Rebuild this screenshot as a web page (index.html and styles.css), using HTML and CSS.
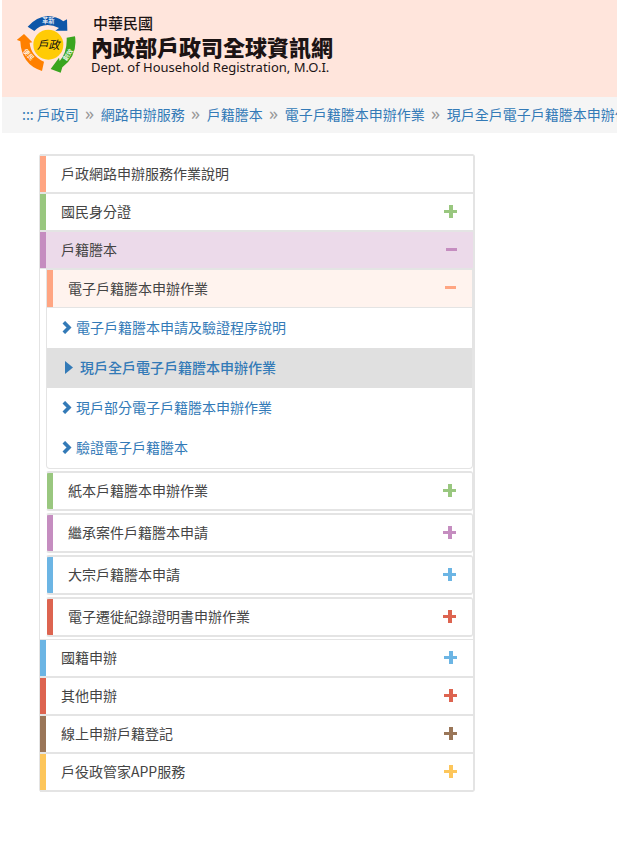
FILE: index.html
```html
<!DOCTYPE html>
<html lang="zh-Hant">
<head>
<meta charset="utf-8">
<meta name="viewport" content="width=device-width, initial-scale=1">
<title>內政部戶政司全球資訊網</title>
<link rel="stylesheet" href="styles.css">
</head>
<body>
<svg class="sprite" aria-hidden="true">
  <symbol id="plus" viewBox="0 0 13 13"><path fill="currentColor" d="M5 0h4v5h4v3H9v5H5V8H0V5h5z"/></symbol>
  <symbol id="minus" viewBox="0 0 13 13"><path fill="currentColor" d="M2 5h11v3H2z"/></symbol>
  <symbol id="chevron" viewBox="0 0 10 13"><path fill="none" stroke="currentColor" stroke-width="3.6" d="M1.8 1.2L7 6.5l-5.2 5.3"/></symbol>
  <symbol id="caret" viewBox="0 0 8 13"><path fill="currentColor" d="M0 0l8 6.5L0 13z"/></symbol>
</svg>
<header class="header">
  <a class="brand" href="#">
    <svg class="logo" viewBox="21 31 180 180" aria-hidden="true">
      <path fill="#0d56a8" d="M53 66Q80 36 113 34Q140 35 160 50L171 44L172 78L136 78L147 70Q130 61 113 61Q88 61 73 79Z"/>
      <path fill="#3aa51f" d="M170 99L195 95Q204 152 157 188L152 204L122 193L147 159L149 169Q172 143 170 99Z"/>
      <path fill="#ff8000" d="M42 88L67 113L59 114Q62 153 102 171L96 199Q34 180 31 110L20 106Z"/>
      <circle cx="115" cy="120" r="45" fill="#ffcb05"/>
      <g class="logo-small">
        <text x="115" y="55">革新</text>
        <text x="56" y="157" transform="rotate(48 56 150)">便民</text>
        <text x="174" y="157" transform="rotate(-58 174 150)">創效</text>
      </g>
      <text class="logo-name" x="115" y="133">戶政</text>
    </svg>
    <span class="brand-text">
      <span class="country">中華民國</span>
      <span class="site">內政部戶政司全球資訊網</span>
      <span class="english">Dept. of Household Registration, M.O.I.</span>
    </span>
  </a>
</header>
<nav class="crumbs" aria-label="breadcrumb">
  <a class="anchor" href="#">:::</a>
  <ol class="crumb-list">
    <li><a href="#">戶政司</a></li>
    <li><a href="#">網路申辦服務</a></li>
    <li><a href="#">戶籍謄本</a></li>
    <li><a href="#">電子戶籍謄本申辦作業</a></li>
    <li><a href="#">現戶全戶電子戶籍謄本申辦作業</a></li>
  </ol>
</nav>
<main class="main">
  <nav class="menu">
    <a class="row orange" href="#">戶政網路申辦服務作業說明</a>
    <button class="row green" type="button">國民身分證<svg class="icon"><use href="#plus"/></svg></button>
    <button class="row purple open" type="button">戶籍謄本<svg class="icon"><use href="#minus"/></svg></button>
    <div class="submenu">
      <div class="panel">
        <button class="row orange open" type="button">電子戶籍謄本申辦作業<svg class="icon"><use href="#minus"/></svg></button>
        <ul class="links">
          <li><a href="#"><svg class="chevron"><use href="#chevron"/></svg>電子戶籍謄本申請及驗證程序說明</a></li>
          <li><a class="current" href="#"><svg class="caret"><use href="#caret"/></svg>現戶全戶電子戶籍謄本申辦作業</a></li>
          <li><a href="#"><svg class="chevron"><use href="#chevron"/></svg>現戶部分電子戶籍謄本申辦作業</a></li>
          <li><a href="#"><svg class="chevron"><use href="#chevron"/></svg>驗證電子戶籍謄本</a></li>
        </ul>
      </div>
      <button class="row green" type="button">紙本戶籍謄本申辦作業<svg class="icon"><use href="#plus"/></svg></button>
      <button class="row purple" type="button">繼承案件戶籍謄本申請<svg class="icon"><use href="#plus"/></svg></button>
      <button class="row blue" type="button">大宗戶籍謄本申請<svg class="icon"><use href="#plus"/></svg></button>
      <button class="row red" type="button">電子遷徙紀錄證明書申辦作業<svg class="icon"><use href="#plus"/></svg></button>
    </div>
    <button class="row blue" type="button">國籍申辦<svg class="icon"><use href="#plus"/></svg></button>
    <button class="row red" type="button">其他申辦<svg class="icon"><use href="#plus"/></svg></button>
    <button class="row brown" type="button">線上申辦戶籍登記<svg class="icon"><use href="#plus"/></svg></button>
    <button class="row yellow" type="button">戶役政管家APP服務<svg class="icon"><use href="#plus"/></svg></button>
  </nav>
</main>
</body>
</html>
```
FILE: styles.css
```css
* { box-sizing: border-box; }
body {
  margin: 0;
  padding-left: 2px;
  background: #fff;
  color: #444;
  font: 14px/20px "Noto Sans CJK TC", sans-serif;
}
a { color: #337ab7; text-decoration: none; }
.sprite { display: none; }

.header { padding: 13px 15px 11px; background: #ffe5dc; }
.brand { display: flex; gap: 14px; color: #1c1414; }
.logo { flex: none; width: 60px; height: 60px; margin-top: 2px; }
.logo-small { fill: #fff; font-size: 19px; font-weight: 500; text-anchor: middle; }
.logo-name { fill: #111; font-size: 34px; font-style: italic; text-anchor: middle; }
.brand-text { display: flex; flex-direction: column; height: 73px; white-space: nowrap; }
.country { padding-left: 2px; font-size: 15px; font-weight: 500; line-height: 20px; }
.site { font-size: 22px; font-weight: 900; line-height: 27px; }
.english { font: 13px/15px "Noto Sans", sans-serif; }

.crumbs {
  display: flex;
  gap: 3px;
  padding: 7px 0 9px 20px;
  overflow: hidden;
  background: #f5f5f5;
  white-space: nowrap;
}
.crumb-list { display: flex; margin: 0; padding: 0; list-style: none; }
.crumb-list li { display: flex; }
.crumb-list li + li::before {
  content: "»";
  width: 22px;
  color: #999;
  font: 18px/18px "Noto Sans", sans-serif;
  text-align: center;
}

.main { padding: 21px 20px 60px 37px; }
.menu {
  max-width: 436px;
  border: 1px solid #e4e4e4;
  border-width: 0 2px 0 1px;
  border-radius: 3px;
}
.row {
  display: flex;
  align-items: center;
  justify-content: space-between;
  width: 100%;
  min-height: 38px;
  padding: 0 16px 2px 21px;
  border: 0 solid #e4e4e4;
  border-top-width: 2px;
  background: linear-gradient(var(--tone), var(--tone)) left / 6px 100% no-repeat #fff;
  color: #444;
  font: inherit;
  text-align: left;
}
.menu > .row:last-child { min-height: 40px; border-bottom-width: 2px; }
.icon { flex: none; width: 13px; height: 13px; color: var(--tone); }
.orange { --tone: #ffa582; }
.green { --tone: #99c77f; }
.purple { --tone: #c58dc0; }
.blue { --tone: #6cb5e4; }
.red { --tone: #dd6450; }
.brown { --tone: #9a7658; }
.yellow { --tone: #fdc65b; }
.purple.open { background-color: #ecdaea; }
.orange.open { background-color: #fff3ee; }

.submenu {
  display: flex;
  flex-direction: column;
  gap: 2px;
  padding: 0 0 2px 6px;
  border-top: 1px solid #e4e4e4;
}
.submenu + .row { min-height: 37px; border-top-width: 1px; }
.submenu .row {
  min-height: 40px;
  border-width: 2px 1px 2px 1px;
  border-left-color: transparent;
  border-radius: 3px;
}
.submenu .panel .row {
  min-height: 39px;
  border-width: 1px 0;
  border-radius: 0;
}
.panel { border: 1px solid #e4e4e4; border-top: 0; border-radius: 0 0 4px 4px; }
.links { margin: 0; padding: 0; list-style: none; }
.links a { display: flex; align-items: center; min-height: 40px; padding: 0 0 2px 15px; }
.links .current { padding-left: 18px; background: #e0e0e0; font-weight: 500; }
.chevron { width: 10px; height: 13px; margin-right: 4px; }
.caret { width: 8px; height: 13px; margin-right: 7px; }
```
